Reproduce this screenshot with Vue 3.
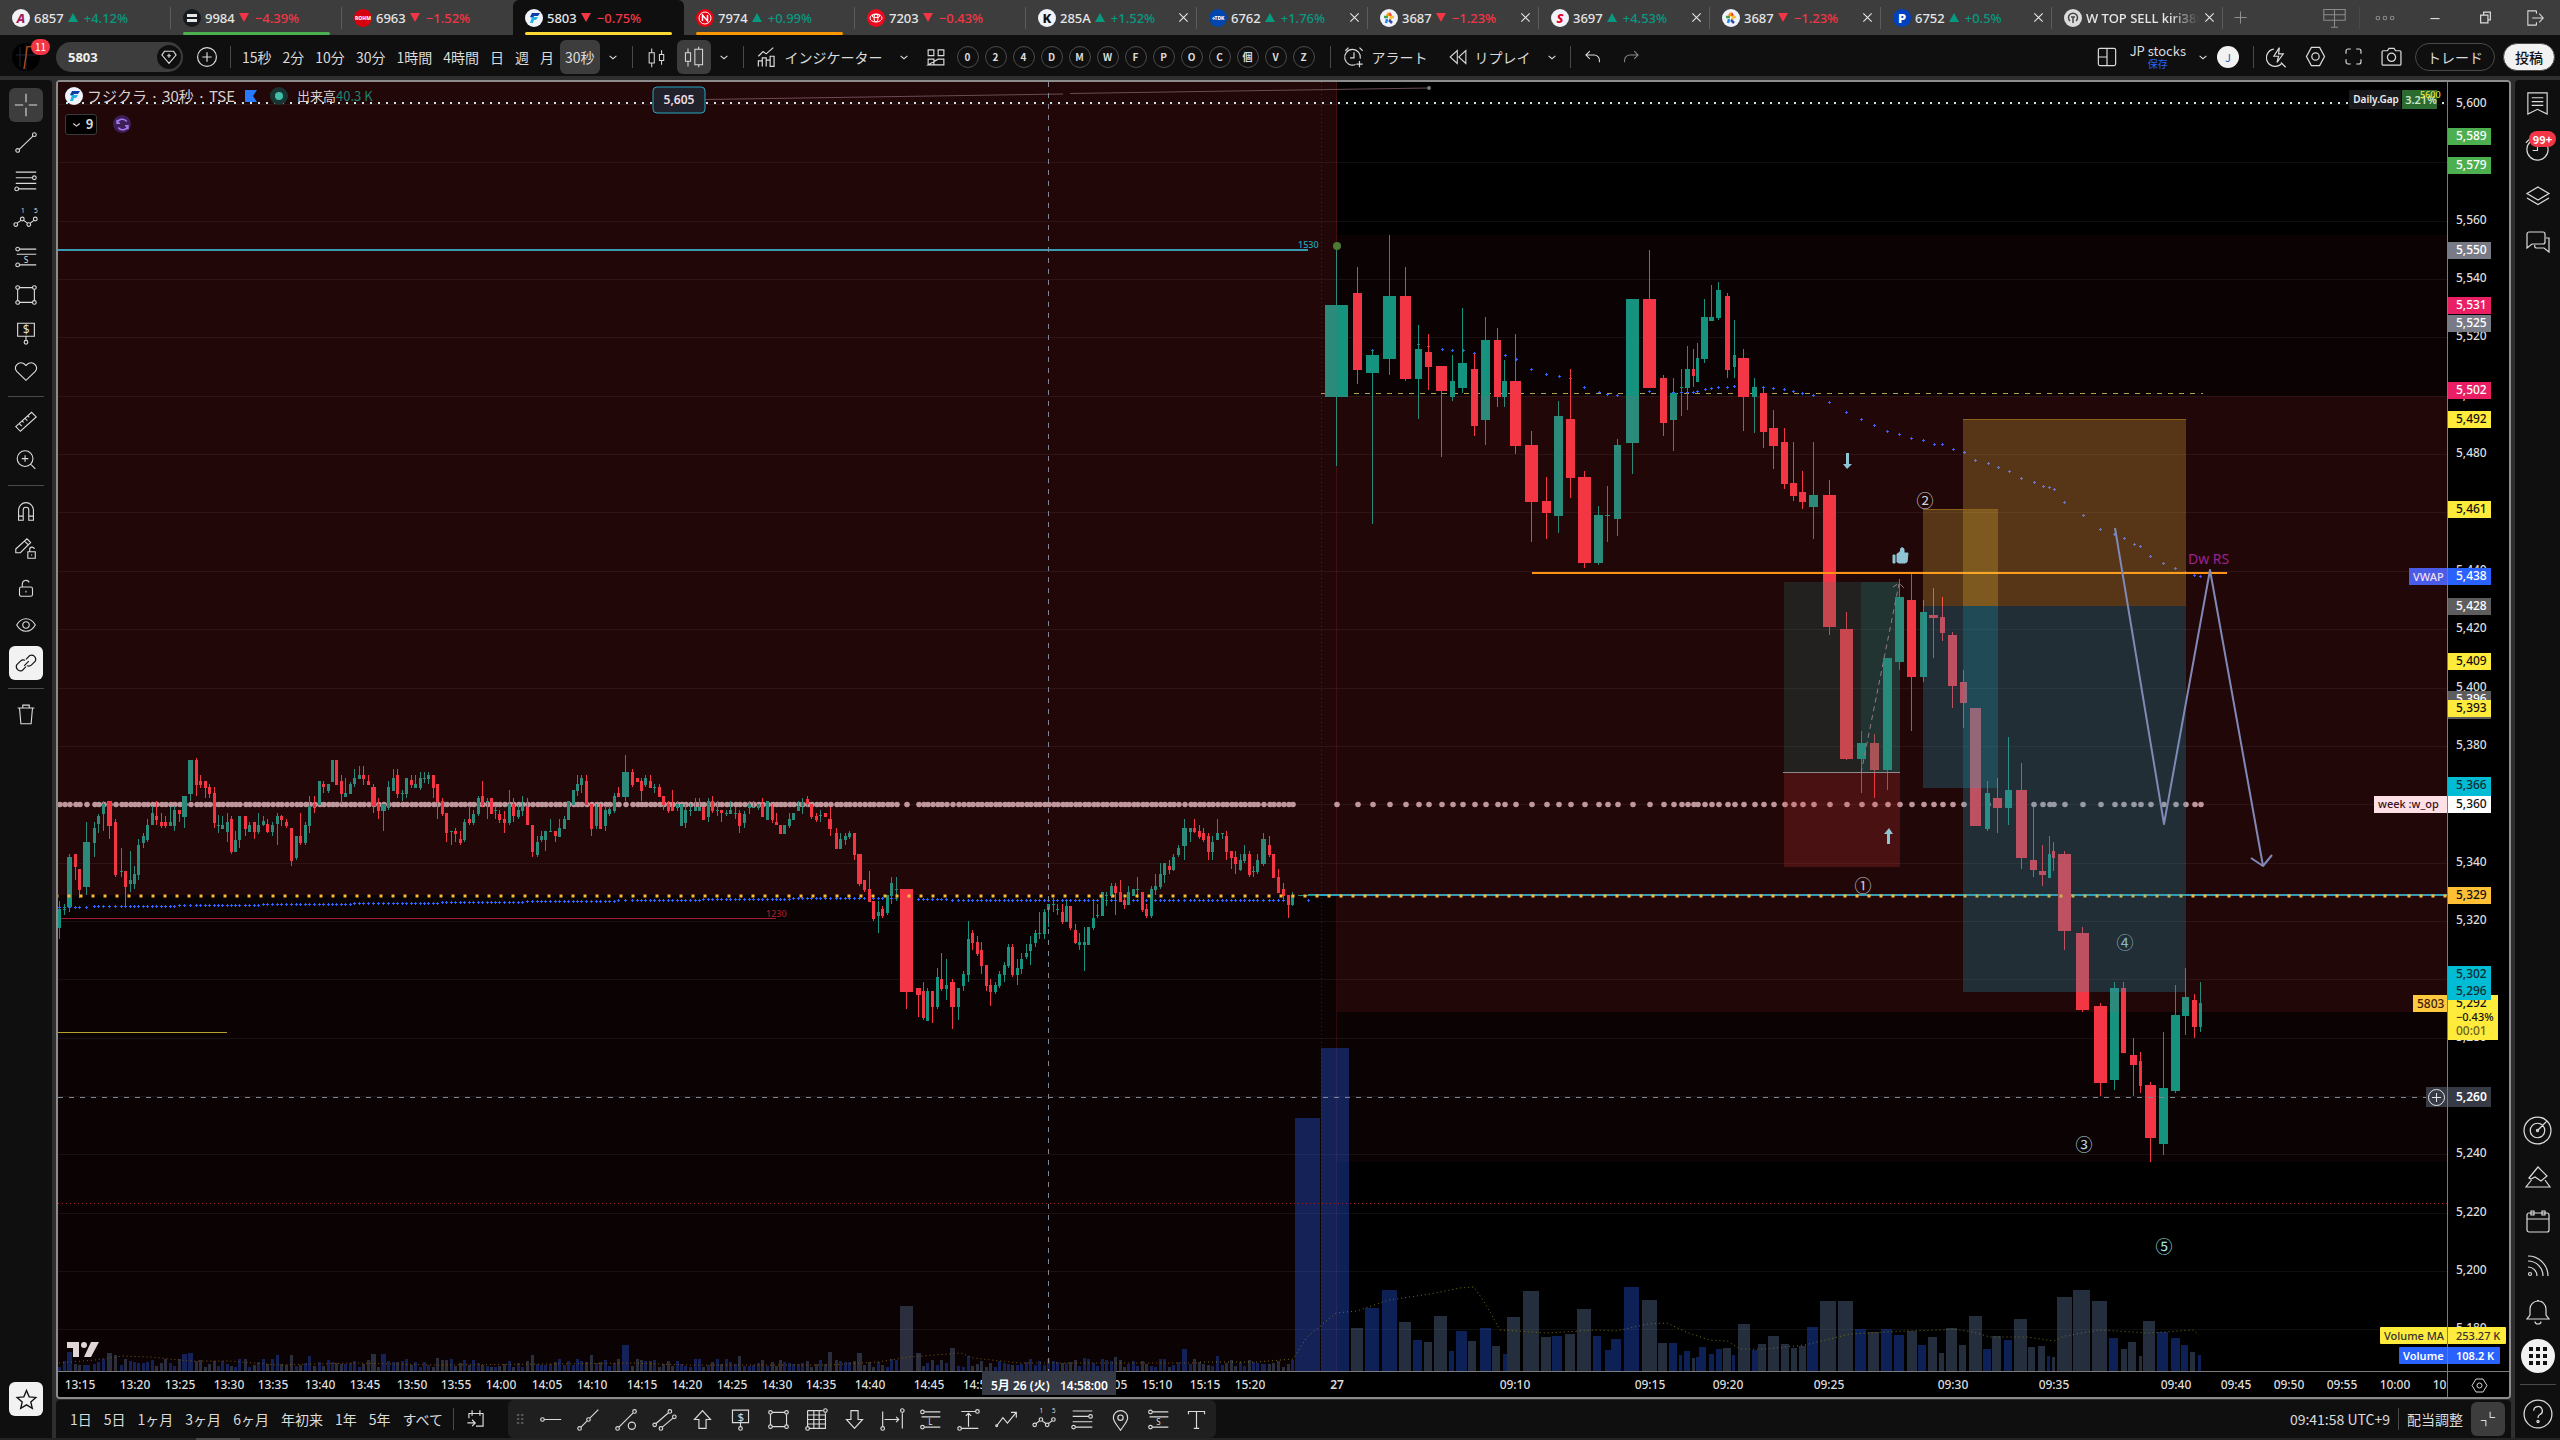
<script setup>
import { h } from 'vue'

/* ---------- icons (28 unit grid) ---------- */
const c = (x, y, r) => `M${x - r} ${y}a${r} ${r} 0 1 0 ${2 * r} 0a${r} ${r} 0 1 0 ${-2 * r} 0`
const lock = 'M9 14h10a2 2 0 0 1 2 2v6a2 2 0 0 1-2 2H9a2 2 0 0 1-2-2v-6a2 2 0 0 1 2-2zM14 18v2'
const icons = {
  cross: ['M14 2v9M14 17v9M2 14h9M17 14h9'],
  trend: [c(5, 22, 2) + c(23, 5, 2) + 'M7 20.500L21.500 6.500'],
  fib: ['M3 4.500h22M3 10.500h18M3 16.500h22M6 22.500h19' + c(23, 10.5, 2) + c(4, 22.5, 2)],
  wave: [c(3, 20, 2) + c(10, 14, 2) + c(17, 20, 2) + c(24, 14, 2) + 'M4.500 18.500l4-3M11.500 15.500l4 3M18.500 18.500l4-3', [8.5, 7, '1', 7], [22.500, 7, '5', 7]],
  pos: [c(5, 5.5, 2) + c(5, 22.5, 2) + 'M7 5.500h18M7 22.500h18M4 11h21', [11.5, 20, 'S', 9]],
  posl: [c(5, 5.5, 2) + c(5, 22.5, 2) + 'M7 5.500h18M7 22.500h18M4 11h21', [11.5, 20, 'L', 9]],
  rect: [c(5, 6, 2) + c(23, 6, 2) + c(5, 22, 2) + c(23, 22, 2) + 'M7 6h14M7 22h14M5 8v12M23 8v12'],
  money: ['M5 3.500h18v14H5zM14 17.500v4' + c(14, 24, 2), [10.5, 15.5, '$', 13]],
  heart: ['M14 24L4 14.500c-4-5 2-11.500 7.500-8.500l2.500 2 2.500-2c5.500-3 11.500 3.500 7.500 8.500z'],
  ruler: ['M3 19L20 3.500l5 5L8 24zM7 16l2.500 2.500M10 13l1.500 1.500M13 10l2.500 2.500M16 7.500l1.500 1.500'],
  zoomin: [c(13, 12.5, 8.5) + 'M19 18.500l5 5M13 9v7M9.500 12.500h7'],
  magnet: ['M6 24V13a8 8 0 0 1 16 0v11h-5V13a3 3 0 0 0-6 0v11zM6 19.500h5M17 19.500h5'],
  penlock: ['M3 14L15 3l4 4L8 18H3zM12.500 5.500l4 4M16 17h8v7h-8zM18 17v-2a2.500 2.500 0 0 1 5-1M20 20v1'],
  lock: [lock + 'M10 14v-3a4 4 0 0 1 7.500-2'],
  eye: ['M4 14c5-9 15-9 20 0-5 9-15 9-20 0z' + c(14, 14, 3.5)],
  link: ['M12 17l5-5M14 10l4-4a4.500 4.500 0 0 1 6 6l-4 4c-1.500 1.500-3.500 1.500-5 1M14 18l-4 4a4.500 4.500 0 0 1-6-6l4-4c1.500-1.500 3.500-1.500 5-1'],
  trash: ['M5 7.500h18M7 7.500l1.500 17h11L21 7.500M10.500 7V4.500h7V7'],
  star: ['M14 4l3 7 7.500.7-5.700 5 1.700 7.300-6.500-4-6.500 4 1.700-7.300-5.700-5L11 11z'],
  list: ['M4 3h20v22l-10-5-10 5zM8 8h12M8 12h12M8 16h12'],
  clock: [c(14, 14, 11) + 'M14 8v7H9M2 7l4-4M26 7l-4-4'],
  layers: ['M14 5l11 6.500L14 18 3 11.500zM3 16l11 6.500L25 16'],
  chat: ['M5 4h14a2 2 0 0 1 2 2v8a2 2 0 0 1-2 2H8l-5 4V6a2 2 0 0 1 2-2zM22 10h3v14l-5-4h-8a2 2 0 0 1-1-3'],
  radar: [c(14, 14, 13) + c(14, 14, 7) + c(14, 14, 1) + 'M14 14l9-9'],
  peaks: ['M7.500 18L2 25h24l-5-7M5 16l9-11 9 9-6 5-6-4-4 2z'],
  cal: ['M5 6h18a2 2 0 0 1 2 2v15a2 2 0 0 1-2 2H5a2 2 0 0 1-2-2V8a2 2 0 0 1 2-2zM3 12h22M7 4h3v4H7zM18 4h3v4h-3z'],
  rss: [c(6, 22, 1.5) + 'M4 4a20 20 0 0 1 20 20M4 9a15 15 0 0 1 15 15M4 15a9 9 0 0 1 9 9'],
  bell: ['M3 22h22l-3-4v-6a8 8 0 0 0-16 0v6zM11 24.500a3 2.500 0 0 0 6 0M13 3.500h2'],
  help: [c(14, 14, 13) + 'M10 11a4 4 0 1 1 5.500 3.700c-1 .5-1.500 1-1.500 3' + c(14, 21, 1)],
  plusc: [c(14, 14, 12) + 'M14 8v12M8 14h12'],
  plus: ['M14 4v20M4 14h20'],
  chev: ['M8 12l6 5 6-5'],
  bars: ['M6 9h6v12H6zM9 4v5M9 21v5M18 11h5v7h-5zM20.500 6v5M20.500 18v5'],
  bars2: ['M4 9h6v10H4zM7 4v5M7 19v6M15 5h9v18h-9zM19.500 2v3M19.500 23v3'],
  indic: ['M3 26v-7h5v7M8 26V15h5v11M13 26v-8h5v8M18 26V13h5v13zM3 13l6-6 4 3 9-8'],
  grid: ['M3 4h8v8H3zM17 4h8v8h-8zM3 17h8v8H3zM17 17h8v8H3z'],
  alarm: ['M22 16a10 10 0 1 0-6 7.500M14 8v7H9M3 6l4-4M25 6l-4-4M21 19v8M17 23h8'],
  rewind: ['M13 5v18L3 14zM25 5v18l-10-9z'],
  undo: ['M9 5l-6 6 6 6M3 11h13a8 8 0 0 1 8 8v3'],
  redo: ['M19 5l6 6-6 6M25 11H12a8 8 0 0 0-8 8v3'],
  layout: ['M5 3h18a2 2 0 0 1 2 2v18a2 2 0 0 1-2 2H5a2 2 0 0 1-2-2V5a2 2 0 0 1 2-2zM14 3v22M3 14h11'],
  quick: ['M10 4A11 11 0 1 0 20 22M19 21l6 6M17 2l-7 11h6l-2 8 8-11h-6z'],
  gear: ['M9 3h10l6 11-6 11H9L3 14z' + c(14, 14, 4.5)],
  full: ['M3 10V6a3 3 0 0 1 3-3h4M18 3h4a3 3 0 0 1 3 3v4M25 18v4a3 3 0 0 1-3 3h-4M10 25H6a3 3 0 0 1-3-3v-4'],
  camera: ['M4 7h5l2-3h6l2 3h5a1.500 1.500 0 0 1 1.500 1.500V23a1.500 1.500 0 0 1-1.500 1.500H4A1.500 1.500 0 0 1 2.500 23V8.500A1.500 1.500 0 0 1 4 7z' + c(14, 15, 5)],
  screens: ['M2 5h24v12H2zM14 5v20M10 25h8M2 11h24'],
  dots: [c(4, 14, 2.5) + c(14, 14, 2.5) + c(24, 14, 2.5)],
  min: ['M6 15h16'],
  restore: ['M6 10h12v13H6zM11 10V5h11v13h-4'],
  exit: ['M16 4H4v20h12M16 20v4M16 4v4M10 14h15M20 8l5.500 6-5.500 6'],
  x: ['M5 5l18 18M23 5L5 23'],
  gem: ['M7 5h14l4 6-11 13L3 11zM14 9v6M11 12h6'],
  calgo: ['M23 12V7H5v6M9 3v7M19 3v7M23 12v11H14M3 19h9M9 15l4 4-4 4'],
  hray: [c(5, 14, 2) + 'M7 14h19'],
  line: [c(4, 24, 2) + c(14, 14, 2) + 'M5.500 22.500l7-7M15.500 12.500L25 3'],
  chan: [c(4, 24, 2) + c(23, 5, 2) + c(20, 21, 4) + 'M5.500 22.500L21.500 6.500'],
  para: [c(3, 20, 2) + c(20, 5, 2) + c(10, 24, 2) + c(25, 11, 2) + 'M4.500 18.500l14-12M11.500 22.500l12-10'],
  up: ['M14 4l9 10h-5v10h-8V14H5z'],
  down: ['M14 24l9-10h-5V4h-8v10H5z'],
  gridd: ['M4 4h17M4 4v18M6 24h18V7M4 14h20M11 4v20M17 4v20M4 9h20M4 19h20' + c(24, 4, 2) + c(4, 24, 2)],
  width: ['M3 5v17M25 7v17M5 14h16M18 11l3 3-3 3' + c(3, 24, 2) + c(25, 4, 2)],
  height: ['M6 5h16M6 24h19M14 7v15M11 10l3-3 3 3' + c(24, 5, 2) + c(4, 24, 2)],
  zig: ['M3 21l7-9 5 6L25 6M25 12V6h-6' + c(3, 21, 1)],
  pin: ['M14 26c-5-7-8-10-8-14a8 8 0 0 1 16 0c0 4-3 7-8 14z' + c(14, 12, 3)],
  text: ['M5 8V5h18v3M14 5v19M11 24h6'],
  shrink: ['M17 4v8h7M4 16h7v8'],
  sync: ['M5 12a9 9 0 0 1 16-3M23 16a9 9 0 0 1-16 3M5 6v6h5M23 22v-6h-5']
}
const Icon = (p) => {
  const [d, ...texts] = icons[p.n]
  const s = p.s || 26
  return h('svg', { viewBox: '0 0 28 28', width: s, height: s, fill: 'none', stroke: 'currentColor', 'stroke-width': p.w || 1.2, style: 'display:block;flex:none', 'aria-hidden': 'true' }, [
    h('path', { d }),
    ...texts.map((t) => h('text', { x: t[0], y: t[1], 'font-size': t[3], fill: 'currentColor', stroke: 'none', 'font-family': 'Noto Sans' }, t[2]))
  ])
}

/* ---------- header data ---------- */
const tabs = [
  { code: '6857', ch: '+4.12%', logo: 'A', bg: '#f2f2f7', fg: '#9c1f5a' },
  { code: '9984', ch: '−4.39%', shape: 'bars', bg: '#171b20', line: '#4caf50' },
  { code: '6963', ch: '−1.52%', logo: 'ROHM', bg: '#d9000d', fg: '#fff', small: true },
  { code: '5803', ch: '−0.75%', shape: 'fuji', bg: '#f0f3fa', line: '#fdd835', on: true },
  { code: '7974', ch: '+0.99%', shape: 'ring', bg: '#e60012', line: '#ff9800' },
  { code: '7203', ch: '−0.43%', shape: 'oval', bg: '#eb0a1e' },
  { code: '285A', ch: '+1.52%', logo: 'K', bg: '#f0f3fa', fg: '#111', x: true, plain: true },
  { code: '6762', ch: '+1.76%', logo: '⋄TDK', bg: '#0046ad', fg: '#fff', small: true, x: true },
  { code: '3687', ch: '−1.23%', shape: 'star', bg: '#f0f3fa', x: true },
  { code: '3697', ch: '+4.53%', logo: 'S', bg: '#f0f3fa', fg: '#e2002b', x: true },
  { code: '3687', ch: '−1.23%', shape: 'star', bg: '#f0f3fa', x: true },
  { code: '6752', ch: '+0.5%', logo: 'P', bg: '#0041c0', fg: '#fff', x: true, plain: true },
  { code: 'W TOP SELL kiri380', ch: '', shape: 'face', bg: '#dbdbdb', x: true }
]
const intervals = ['15秒', '2分', '10分', '30分', '1時間', '4時間', '日', '週', '月', '30秒']
const favs = [...'024DMWFPOC個VZ']
const left = [['cross', 'trend', 'fib', 'wave', 'pos', 'rect', 'money', 'heart'], ['ruler', 'zoomin'], ['magnet', 'penlock', 'lock', 'eye', 'link'], ['trash']]
const ranges = ['1日', '5日', '1ヶ月', '3ヶ月', '6ヶ月', '年初来', '1年', '5年', 'すべて']
const drawTools = ['hray', 'line', 'chan', 'para', 'up', 'money', 'rect', 'gridd', 'down', 'width', 'posl', 'height', 'zig', 'wave', 'fib', 'pin', 'pos', 'text']

/* ---------- candles: centre width high top bottom low colour ---------- */
const parse = (ox, oy, sx, sy, text) =>
  text.trim().split(/[,\n]+/).map((row) => {
    const v = row.trim().split(' ')
    const n = v.slice(0, 6).map(Number)
    const w = Math.max(1, Math.round(n[1] / sx))
    const cx = Math.round(ox + n[0] / sx - 0.5)
    const y = (k) => Math.round(oy + n[k] / sy)
    return { cx, x: cx - Math.floor(w / 2), w, hi: y(2), top: y(3), h: Math.max(1, y(4) - y(3)), lo: y(5), up: v[6] === 'g', rawX: n[0] }
  })

const afternoon = parse(0, 700, 1.7422, 3, `
103 6 603 627 684 716 g,112 6 612 627 630 645 g,121 8 462 471 622 636 g,131 5 462 462 501 540 r,138 6 507 507 570 594 r,151 12 366 426 561 585 g
165 5 366 384 429 471 g,172 5 342 348 371 398 g,180 5 303 312 342 393 g,190 9 304 304 378 417 r,201 6 357 366 525 531 r,211 6 444 513 516 531 g
219 6 513 513 561 618 r,227 6 453 540 552 576 g,234 6 498 522 552 567 g,241 6 417 435 525 540 g,250 6 399 408 429 444 g,257 6 357 375 420 426 g
265 6 318 339 375 375 g,273 6 303 348 360 375 r,281 6 339 366 378 384 r,288 6 348 366 378 384 r,297 6 321 366 378 378 g,304 6 318 330 378 393 g
312 6 330 330 342 366 r,321 8 288 288 351 384 g,332 8 180 180 282 303 g,342 6 174 180 255 288 r,349 6 225 243 255 264 r,358 6 243 243 264 294 r
365 6 252 261 282 294 r,374 6 261 279 369 384 r,381 6 344 374 377 398 g,388 6 348 375 387 387 g,396 6 339 366 396 426 g,403 6 348 357 456 462 r,411 6 393 420 456 456 g
418 6 348 348 420 444 g,427 6 348 348 387 408 r,435 6 366 375 396 396 g,443 6 366 366 396 417 r,450 6 339 375 396 402 g,459 6 348 363 375 378 g
466 6 357 371 396 399 r,474 6 366 375 396 408 g,483 6 339 348 372 435 g,491 6 345 348 360 378 r,499 6 357 366 378 384 r,507 6 384 384 483 498 r
516 6 408 408 474 480 g,524 6 339 408 429 435 r,532 6 366 375 429 435 g,539 6 288 318 378 399 g,548 6 288 312 324 339 r,557 6 243 243 315 315 g
563 6 243 252 261 279 r,572 6 252 252 273 279 g,580 6 180 180 246 246 g,586 6 180 180 255 255 r,595 6 225 243 282 312 r,602 6 234 279 291 291 g
610 6 246 252 282 282 g,617 6 207 234 252 261 g,626 6 198 225 237 237 g,633 6 198 225 237 255 r,642 6 225 243 255 255 r,651 8 252 261 318 339 r
659 6 294 312 333 357 r,668 8 312 312 333 393 g,677 6 243 261 324 330 g,685 6 207 234 272 272 g,692 6 207 225 282 294 r,701 6 270 279 282 303 g
708 6 234 234 282 294 g,717 6 225 240 255 264 r,724 6 225 252 264 264 g,732 6 216 234 264 270 g,740 6 216 234 237 249 g,747 6 216 225 237 252 g
755 6 225 225 264 294 r,763 6 252 252 306 357 r,771 6 294 303 342 348 r,778 6 339 339 399 426 r,786 6 393 393 396 435 g,793 6 384 393 402 426 r
802 6 393 417 429 435 r,809 6 357 366 420 426 g,818 6 318 357 369 375 r,825 6 330 342 369 375 g,833 6 288 294 342 348 g,841 6 243 288 315 321 r
849 6 294 303 306 357 g,856 6 294 294 342 342 r,863 6 318 330 333 357 g,871 6 330 342 360 369 r,879 6 333 357 369 399 r,887 6 270 312 369 375 g
894 6 294 312 348 366 r,903 6 315 330 351 357 g,910 6 288 318 333 348 g,919 6 294 321 375 375 r,927 6 375 375 456 471 r,936 6 408 426 465 471 g
943 6 393 408 420 426 g,951 6 393 393 420 453 g,959 6 357 393 396 396 g,967 6 393 393 408 426 r,975 6 357 384 411 411 g,983 6 348 357 387 387 g
991 6 303 303 360 360 g,999 6 270 270 315 315 g,1006 6 225 252 273 288 g,1013 6 225 234 255 279 g,1021 6 225 243 315 315 r,1030 6 312 312 387 408 r
1040 6 312 321 378 387 g,1047 6 312 321 387 387 r,1055 6 318 330 378 393 g,1062 6 318 327 342 348 g,1070 6 279 288 333 339 g,1078 6 261 279 291 291 r
1090 12 165 216 291 303 g,1102 6 207 216 255 261 r,1110 6 234 234 246 246 r,1118 6 234 243 273 303 r,1125 6 225 234 255 261 g,1133 6 225 243 264 264 r
1140 6 252 261 264 279 g,1149 6 252 261 291 291 r,1156 6 288 288 315 330 r,1164 6 303 312 333 339 r,1172 6 270 321 333 333 r,1180 6 303 312 324 333 g
1188 6 312 312 378 378 g,1195 6 312 330 369 384 g,1203 6 312 330 333 348 g,1211 6 294 321 333 333 g,1218 6 294 321 333 333 g,1226 6 321 321 360 360 r
1234 6 294 303 351 366 g,1241 6 288 303 333 339 r,1250 6 303 330 333 348 g,1257 6 330 330 339 366 r,1265 6 330 339 342 348 g,1273 6 303 330 342 342 g
1281 6 321 339 342 357 g,1289 6 330 339 378 399 r,1297 6 333 342 369 384 g,1305 6 303 312 324 342 g,1313 6 303 321 324 324 g,1321 6 312 312 324 330 g
1328 6 294 312 351 351 r,1337 6 303 303 360 360 g,1345 6 312 321 360 369 r,1352 6 339 366 375 375 r,1360 6 375 375 402 402 r,1367 6 375 375 402 402 g
1375 6 339 357 378 384 g,1383 6 339 339 360 360 g,1391 6 303 318 333 333 g,1398 6 294 306 318 342 g,1407 6 288 297 312 321 r,1414 6 312 312 351 357 r
1422 6 339 348 360 366 r,1430 6 330 345 348 366 g,1438 6 339 339 351 351 r,1447 7 321 357 387 408 r,1457 6 384 399 447 447 r,1465 6 399 417 447 447 g
1473 6 399 408 420 435 g,1480 6 393 399 411 417 g,1488 6 399 399 465 480 r,1497 8 462 462 552 558 r,1506 6 540 540 570 576 r,1514 6 513 567 606 606 r
1521 6 603 603 657 663 r,1530 6 603 636 648 699 g,1538 6 618 627 648 654 r,1546 6 585 585 639 645 g,1553 6 531 549 587 612 g,1562 6 531 567 570 603 g`)

const closing = parse(860, 700, 3, 3, `
139 39 567 567 876 927 r,175 14 864 864 885 951 r,190 9 846 873 954 960 r,202 9 864 873 963 963 g,217 9 873 873 921 969 r,232 9 804 831 921 927 g
244 9 759 837 867 873 r,259 9 777 855 867 900 g,277 15 837 846 921 987 r,295 9 864 864 921 960 g,310 9 813 822 858 873 g,325 9 663 717 825 846 g
337 9 690 699 729 750 r,352 9 708 726 762 768 r,364 9 726 750 798 822 r,379 9 795 795 858 873 r,391 9 837 855 876 918 r,406 9 846 855 876 882 g
418 9 813 822 858 864 g,433 9 786 795 825 846 g,445 9 732 741 798 804 g,457 9 732 741 825 831 r,472 9 777 804 825 855 g,484 9 759 777 807 822 g
499 9 732 759 771 777 g,511 9 708 732 753 795 g,526 9 690 699 729 741 g,538 9 636 699 702 717 g,553 9 627 636 702 717 g,565 9 612 612 630 681 g
580 9 594 612 615 636 g,592 9 612 627 630 645 g,607 9 612 636 666 672 r,619 9 603 618 666 666 g,631 9 618 618 684 690 r,646 9 672 690 729 732 r
658 9 699 726 735 750 g,673 9 681 726 735 813 g,685 9 681 681 735 735 g,700 9 600 654 684 690 g,712 9 612 645 648 654 g,727 9 576 576 648 648 g
739 9 576 585 588 618 g,754 9 549 558 588 594 g,766 9 549 558 579 645 r,781 9 540 576 606 606 r,793 9 594 600 615 627 r,805 9 558 576 615 615 g
820 9 567 567 588 588 g,832 9 531 567 570 594 g,847 9 576 576 630 636 r,859 9 612 627 648 654 r,874 9 558 567 648 654 g,886 9 522 558 570 585 g
901 9 489 522 561 567 g,913 9 489 489 525 549 g,928 9 480 498 510 522 r,940 9 462 471 510 513 g,955 9 435 444 465 471 g,973 15 357 384 438 480 g
991 9 384 384 396 426 g,1003 9 357 384 396 399 r,1018 9 375 393 411 417 r,1030 9 384 399 420 426 r,1045 9 399 408 456 480 r,1057 9 408 426 456 480 g
1072 9 357 399 420 420 g,1087 9 399 399 402 417 g,1099 9 393 408 456 480 r,1114 9 453 453 474 507 r,1126 9 453 471 492 522 r,1141 9 462 480 510 513 g
1153 9 435 462 483 489 g,1168 9 453 462 525 531 r,1180 9 498 513 516 531 g,1192 9 462 480 516 522 g,1210 15 399 417 492 498 g,1228 9 408 435 465 471 r
1240 9 462 462 534 534 r,1255 9 507 531 579 579 r,1270 9 549 567 588 603 r,1285 9 585 585 615 654 r,1297 9 576 585 615 618 g,1345 62 585 585 588 588 g`)

const morning = parse(1290, 200, 2.376, 2.529, `
110 55 118 266 498 673 g,160 21 169 235 430 465 r,196 30 380 392 438 819 g,236 31 89 243 402 443 g,274 26 169 243 453 458 r,305 17 316 377 453 554 g
329 16 339 384 422 481 r,360 26 420 420 483 650 r,386 12 392 458 498 508 g,410 22 273 412 475 488 g,438 17 389 427 572 597 r,464 21 296 354 556 620 g
493 16 324 354 498 524 r,510 12 405 458 498 524 g,536 26 339 458 622 642 r,573 31 584 620 764 865 r,609 21 701 761 792 857 r,638 22 508 546 799 842 g
666 21 427 554 703 754 r,699 31 685 701 918 931 r,733 22 774 797 918 923 g,754 12 723 797 799 865 g,778 16 604 620 807 850 g,814 31 250 250 615 693 g
854 31 126 250 475 475 r,887 17 443 450 564 597 r,911 16 450 488 556 635 g,930 7 427 473 475 546 g,944 12 369 427 475 531 g,958 7 377 427 445 473 r
968 7 362 400 460 460 g,985 17 250 296 402 412 g,1001 12 215 296 306 306 g,1018 12 207 228 298 303 g,1039 12 235 243 430 450 r,1056 8 303 392 422 450 g
1077 26 377 400 498 584 r,1103 11 450 473 498 589 g,1125 16 473 488 587 627 r,1148 21 531 577 622 680 r,1174 17 577 612 718 731 r,1196 17 612 716 749 761 r
1217 17 685 738 764 781 r,1243 21 612 746 776 857 g,1281 31 708 746 1080 1100 r,1322 31 1042 1085 1414 1416 r,1357 21 1343 1373 1414 1500 g
1388 21 1351 1373 1442 1512 r,1419 21 1158 1158 1442 1492 g,1448 22 959 1004 1168 1189 g,1476 21 945 1012 1206 1343 r`)

const decline = parse(1760, 380, 2.8, 1.742, `
458 20 383 404 517 526 g,485 25 362 409 415 484 r,511 14 378 413 441 455 r,539 26 439 444 533 571 r,570 20 505 526 563 606 r,603 31 571 571 777 777 r
637 14 699 720 782 786 g,665 26 693 728 746 789 r,696 20 622 714 746 775 g,732 31 667 714 833 852 r,766 20 743 836 854 866 r,791 20 810 855 862 882 r
810 9 794 826 868 868 g,822 8 805 821 833 855 r,852 37 821 826 960 993 r,903 36 953 963 1098 1101 r,953 37 1085 1091 1225 1247 r,992 25 1049 1059 1220 1237 g
1018 14 1049 1059 1173 1173 r,1046 20 1146 1176 1193 1247 r,1065 9 1171 1186 1230 1242 r,1093 31 1223 1228 1321 1363 r,1129 25 1136 1233 1331 1350 g
1163 25 1054 1106 1239 1242 g,1191 19 1024 1075 1108 1141 g,1216 14 1070 1080 1127 1146 r,1233 9 1049 1085 1127 1136 g`)

const candles = [...afternoon, ...closing, ...morning, ...decline]

/* ---------- vwap crosses ---------- */
const pairs = (ox, oy, sx, sy, t) => t.trim().split(' ').map((p) => {
  const [x, y] = p.split(',').map(Number)
  return [Math.round(ox + x / sx), Math.round(oy + y / sy)]
})
const vwap = [
  ...afternoon.map((k) => [k.cx, 907 - Math.min(9, Math.floor(k.rawX / 153))]),
  ...closing.slice(1).map((k) => [k.cx, k.rawX < 270 ? 899 : 900]),
  ...pairs(1290, 200, 2.376, 2.529, '196,380 305,365 329,368 360,377 386,380 410,380 438,388 510,393 536,401 573,428 609,441 638,446 666,451 699,474 733,485 754,490 778,494 854,482 911,485 930,485 944,485 958,485 968,482 985,479 1001,476 1018,474 1039,474 1056,471 1125,474 1148,476 1174,479 1196,482 1217,487 1243,492 1281,510 1322,537 1357,555 1388,570 1419,585 1448,593 1476,603 1505,608 1529,616 1550,618'),
  ...pairs(1760, 380, 2.8, 1.742, '539,121 570,125 603,139 637,144 665,152 696,159 732,171 766,178 791,184 810,187 822,190 852,212 903,236 953,260 992,269 1018,276 1046,285 1065,290 1093,306 1129,318 1163,327 1191,334 1216,339 1233,342')
]
const vwapPath = vwap.map(([x, y]) => `M${x - 1} ${y + 0.5}h3M${x + 0.5} ${y - 1}v3`).join('')

/* ---------- volume ---------- */
const peaks = { 88: 19, 138: 18, 145: 16, 233: 17, 241: 18, 350: 16, 368: 16, 391: 15, 472: 17, 486: 17, 553: 13, 672: 16, 747: 16, 791: 26, 935: 15, 1050: 19, 1088: 18, 1147: 65, 1160: 18, 1205: 23, 1225: 15, 1370: 13, 1411: 14, 1497: 22, 1538: 15 }
const early = [...afternoon, ...closing.slice(0, -1)].map((k, i) => ({ x: k.x, w: k.w, h: 4 + ((i * 37 + ((i * i) % 11) * 5) % 9), up: k.up, cx: k.cx }))
for (const [px, ph] of Object.entries(peaks)) {
  const x = px / 1.2645
  const hit = early.reduce((a, b) => (Math.abs(b.cx - x) < Math.abs(a.cx - x) ? b : a))
  hit.h = ph
}
const late = `141 33 294 b,177 36 84 b,205 16 924 g,225 18 864 b,247 20 810 b,268 16 906 g,284 12 960 b,298 10 966 g,314 17 888 g,328 7 993 b,342 14 933 b,356 11 963 g,373 14 924 b,387 10 978 g,398 5 1002 b,410 17 891 g,433 21 813 g,452 13 951 g,467 13 948 b,483 13 942 g,502 18 867 g,519 11 948 b,533 8 990 b,544 13 957 b,564 20 801 b,587 19 840 g,604 12 969 g,618 10 969 b,628 4 1005 b,636 8 993 b,645 4 1014 g,650 4 1011 b,657 9 981 b,669 6 1002 b,678 8 987 b,688 10 984 g,697 4 1005 b,711 16 912 g,725 8 990 b,735 10 972 g,750 14 948 g,764 11 972 g,776 8 984 g,787 9 978 g,801 15 921 b,820 21 843 g,843 19 843 g,863 14 927 b,880 14 936 g,897 14 927 b,914 13 945 b,930 13 933 g,943 11 975 b,957 12 951 g,969 6 999 g,982 14 924 g,997 9 975 g,1013 17 888 g,1029 10 987 b,1041 12 948 g,1056 11 960 b,1072 17 897 g,1087 9 981 g,1099 9 978 g,1109 4 1008 b,1115 4 1011 g,1130 19 831 g,1152 22 810 g,1175 19 843 g,1194 12 954 b,1207 8 987 g,1218 10 966 g,1229 4 1008 g,1240 16 903 g,1258 15 936 b,1275 12 954 b,1287 9 975 b,1297 7 996 g,1306 4 1005 b`
  .split(',').map((r) => {
    const [x, w, t, k] = r.split(' ')
    const bw = Math.round(w / 1.3067)
    return { x: Math.round(1200 + x / 1.3067 - bw / 2), w: bw, h: Math.round((1053 - t) / 3), up: k === 'b' }
  })
const volume = [...early, ...late]
const maEarly = pairs(0, 1240, 1.2645, 3, '75,368 120,360 155,348 190,350 240,364 290,362 350,374 450,370 550,374 700,372 800,368 870,376 1050,376 1110,366 1150,350 1215,340 1230,355 1290,368 1400,370 1517,368').join(' ')
const maLate = pairs(1200, 1020, 1.3067, 3, '0,1025 75,1025 122,1018 140,950 178,879 205,872 247,840 300,823 340,803 358,800 372,850 392,930 455,938 519,931 544,934 585,912 610,910 635,935 665,960 688,963 705,987 740,987 790,975 850,942 920,932 970,931 984,926 1010,935 1032,950 1080,950 1116,962 1130,948 1175,930 1240,940 1298,930 1306,944').join(' ')

/* ---------- axes ---------- */
const ticks = Array.from({ length: 22 }, (_, i) => ({ y: Math.round(104 + i * 58.35), label: (5600 - i * 20).toLocaleString('en-US') })).filter((t) => t.label !== '5,580')
const gridY = Array.from({ length: 22 }, (_, i) => Math.round(104 + i * 58.35))
const tags = [
  ['5,589', 128, '#4caf50', '#fff'], ['5,579', 157, '#4caf50', '#fff'], ['5,550', 242, '#787b86', '#fff'], ['5,531', 297, '#e91e63', '#fff'],
  ['5,525', 315, '#787b86', '#fff'], ['5,502', 382, '#e91e63', '#fff'], ['5,492', 411, '#ffeb3b', '#111'], ['5,461', 501, '#ffeb3b', '#111'],
  ['5,438', 568, '#2962ff', '#fff'], ['5,428', 598, '#5d5d5d', '#fff'], ['5,409', 653, '#ffeb3b', '#111'], ['', 702, '#5d5d5d', '#fff'], ['5,396', 691, '#5d5d5d', '#fff'],
  ['5,393', 700, '#ffeb3b', '#111'], ['', 779, '#00bcd4', '#111'], ['5,366', 777, '#00bcd4', '#0d2b30'], ['5,360', 796, '#ffffff', '#111'], ['5,329', 887, '#ffc036', '#111']
]
const times = [['13:15', 80], ['13:20', 135], ['13:25', 180], ['13:30', 229], ['13:35', 273], ['13:40', 320], ['13:45', 365], ['13:50', 412], ['13:55', 456], ['14:00', 501], ['14:05', 547], ['14:10', 592], ['14:15', 642], ['14:20', 687], ['14:25', 732], ['14:30', 777], ['14:35', 821], ['14:40', 870], ['14:45', 929], ['14:50', 978], ['15:05', 1112], ['15:10', 1157], ['15:15', 1205], ['15:20', 1250], ['27', 1337], ['09:10', 1515], ['09:15', 1650], ['09:20', 1728], ['09:25', 1829], ['09:30', 1953], ['09:35', 2054], ['09:40', 2176], ['09:45', 2236], ['09:50', 2289], ['09:55', 2342], ['10:00', 2395], ['10:05', 2448]]
const marks = [['①', 1863, 886, '#c3c9cc'], ['②', 1925, 501, '#c8d4d8'], ['③', 2084, 1145, '#b5d9de'], ['④', 2125, 943, '#86b8c6'], ['⑤', 2164, 1247, '#a5e0e6']]
</script>

<template>
  <div class="app">
    <nav class="tabs">
      <a v-for="(t, i) in tabs" :key="i" href="#" class="tab" :class="{ on: t.on, before: tabs[i + 1] && tabs[i + 1].on }">
        <span class="logo" :class="{ small: t.small, plain: t.plain }" :style="{ background: t.bg, color: t.fg }">
          <template v-if="t.logo">{{ t.logo }}</template>
          <svg v-else viewBox="0 0 18 18" width="18" height="18">
            <path v-if="t.shape === 'bars'" d="M4 5h10v3H4zM4 10h10v3H4z" fill="#e8e8e8" />
            <g v-else-if="t.shape === 'fuji'"><path d="M5 8l2-4h8l-2 3H9L8 9z" fill="#0a3fa8" /><path d="M5 14l2-6h6l-2 3H9l-1 3z" fill="#1eb4e6" /></g>
            <g v-else-if="t.shape === 'ring'" fill="none" stroke="#fff"><circle cx="9" cy="9" r="6" /><path d="M6.500 12V6l5 6V6" stroke-width="1.500" /></g>
            <g v-else-if="t.shape === 'oval'" fill="none" stroke="#fff"><ellipse cx="9" cy="9" rx="6" ry="4" /><ellipse cx="9" cy="9" rx="2" ry="4" /><ellipse cx="9" cy="7" rx="4" ry="1.500" /></g>
            <g v-else-if="t.shape === 'star'" fill="none" stroke-width="2.500"><path d="M9 4l2 3" stroke="#e53935" /><path d="M9 4L7 7" stroke="#ff9800" /><path d="M4 8h4" stroke="#43a047" /><path d="M14 8h-3l-1 3" stroke="#fbc02d" /><path d="M6 14l1-4" stroke="#1e88e5" /><path d="M12 14l-3-3" stroke="#3949ab" /></g>
            <g v-else fill="none" stroke="#444" stroke-width="1.500"><path d="M6 12a4.500 4.500 0 1 1 6 0" /><path d="M9 8v6M7 8h4" /></g>
          </svg>
        </span>
        <span class="code" :class="{ long: !t.ch }">{{ t.code }}</span>
        <span v-if="t.ch" class="chg" :class="t.ch[0] === '+' ? 'up' : 'dn'"><i></i>{{ t.ch }}</span>
        <button v-if="t.x" class="close" aria-label="閉じる"><Icon n="x" :s="13" :w="2.400" /></button>
        <span v-if="t.line" class="mark" :style="{ background: t.line }"></span>
      </a>
      <button class="addtab" aria-label="追加"><Icon n="plus" :s="17" :w="1.500" /></button>
      <div class="win">
        <button class="dim" aria-label="レイアウト"><Icon n="screens" :s="25" /></button><span class="vsep"></span>
        <button class="dim" aria-label="その他"><Icon n="dots" :s="20" :w="1.500" /></button>
        <button aria-label="最小化"><Icon n="min" :s="16" :w="2" /></button>
        <button aria-label="元に戻す"><Icon n="restore" :s="17" :w="2" /></button>
        <button aria-label="終了"><Icon n="exit" :s="20" :w="1.500" /></button>
      </div>
    </nav>

    <header class="bar">
      <button class="avatar" aria-label="メニュー">
        <svg viewBox="0 0 28 28" width="28" height="28"><circle cx="14" cy="14" r="14" fill="#000" /><path d="M4 12h20M8 4v20M14 1v26" stroke="#1f2530" /><path d="M12 26l2-13 1-9 7-1" stroke="#a34a1c" stroke-width="1.500" fill="none" /></svg>
        <span class="badge">11</span>
      </button>
      <div class="search"><input aria-label="シンボル" value="5803" /><button aria-label="銘柄"><Icon n="gem" :s="18" :w="1.800" /></button></div>
      <button class="sq cmp" aria-label="比較"><Icon n="plusc" :s="22" :w="1.500" /></button>
      <span class="vsep flush"></span>
      <div class="ints"><button v-for="t in intervals" :key="t" :class="{ sel: t === '30秒' }">{{ t }}</button></div>
      <button class="cv" aria-label="時間足"><Icon n="chev" :s="16" :w="1.800" /></button>
      <span class="vsep"></span>
      <div class="styles">
        <button class="sq" aria-label="ローソク足"><Icon n="bars" :s="24" /></button>
        <button class="sq sel" aria-label="出来高ローソク足"><Icon n="bars2" :s="24" /></button>
      </div>
      <button class="cv" aria-label="種類"><Icon n="chev" :s="16" :w="1.800" /></button>
      <span class="vsep"></span>
      <button class="lbl"><Icon n="indic" :s="22" :w="1.500" />インジケーター</button>
      <button class="cv wide" aria-label="お気に入り"><Icon n="chev" :s="16" :w="1.800" /></button>
      <button class="sq" aria-label="テンプレート"><Icon n="grid" :s="20" :w="1.600" /></button>
      <div class="favs"><button v-for="f in favs" :key="f">{{ f }}</button></div>
      <span class="vsep"></span>
      <button class="lbl"><Icon n="alarm" :s="22" :w="1.500" />アラート</button>
      <button class="lbl rp"><Icon n="rewind" :s="20" :w="1.500" />リプレイ</button>
      <button class="cv wide" aria-label="リプレイ設定"><Icon n="chev" :s="16" :w="1.800" /></button>
      <span class="vsep tight"></span>
      <button class="sq un" aria-label="元に戻す"><Icon n="undo" :s="18" :w="1.600" /></button>
      <button class="sq un dim" aria-label="やり直し"><Icon n="redo" :s="18" :w="1.600" /></button>
      <div class="right">
        <button class="sq" aria-label="レイアウト設定"><Icon n="layout" :s="22" :w="1.500" /></button>
        <button class="name"><span>JP stocks</span><small>保存</small></button>
        <button class="cv" aria-label="レイアウト"><Icon n="chev" :s="16" :w="1.800" /></button>
        <span class="jay">J</span><span class="vsep"></span>
        <button class="sq ri" aria-label="クイックサーチ"><Icon n="quick" :s="22" :w="1.500" /></button>
        <button class="sq ri" aria-label="設定"><Icon n="gear" :s="23" :w="1.500" /></button>
        <button class="sq ri" aria-label="全画面"><Icon n="full" :s="19" :w="1.700" /></button>
        <button class="sq ri" aria-label="スナップショット"><Icon n="camera" :s="23" :w="1.500" /></button>
        <button class="pill">トレード</button><button class="pill solid">投稿</button>
      </div>
    </header>

    <main class="main">
      <aside class="left">
        <template v-for="(g, gi) in left" :key="gi">
          <hr v-if="gi" />
          <button v-for="n in g" :key="n" :aria-label="n" :class="{ sel: n === 'cross', lit: n === 'link' }"><Icon :n="n" /></button>
        </template>
        <button class="lit starb" aria-label="お気に入り"><Icon n="star" :s="25" :w="1.500" /></button>
      </aside>

      <section class="centre">
        <div class="frame">
          <svg class="plot" viewBox="58 82 2451 1315" preserveAspectRatio="xMinYMin meet">
            <defs><clipPath id="pane"><rect x="58" y="82" width="2389" height="1315" /></clipPath></defs>
            <rect x="58" y="82" width="2451" height="1315" fill="#000" />
            <rect x="58" y="82" width="1279" height="1289" fill="#0b0203" />
            <rect x="1337" y="235" width="1110" height="927" fill="#0b0203" />
            <path :d="gridY.map((y) => `M58 ${y + 0.5}H2447`).join('')" stroke="#fff" stroke-opacity=".06" />
            <path d="M1321.500 82V1371" stroke="#3a1150" stroke-dasharray="1 3" /><path d="M1336.500 82V1371" stroke="#f23645" stroke-opacity=".15" />

            <rect v-for="(v, i) in volume" :key="'v' + i" :x="v.x" :y="1371 - v.h" :width="v.w" :height="v.h" :fill="v.up ? '#2962ff' : '#6987af'" fill-opacity=".34" />
            <polyline :points="maEarly" fill="none" stroke="#7d5a18" stroke-width="1" stroke-dasharray="1 3" />
            <polyline :points="maLate" fill="none" stroke="#78701f" stroke-width="1" stroke-dasharray="1 3" />
            <path d="M58 1203.500H2447" stroke="#a32533" stroke-dasharray="1 3" />

            <g v-for="(k, i) in candles" :key="'d' + i"><circle v-if="k.cx !== 1308" :cx="k.cx + 1" cy="804.500" r="2.800" fill="#b9a1a5" /></g>
            <path :d="vwapPath" stroke="#2f62ff" />
            <path d="M58 250H1308" stroke="#22a7c0" stroke-width="2" /><path d="M1308 895H2447" stroke="#22a7c0" stroke-width="2" />
            <path d="M60 918.500H776" stroke="#a31d2b" /><path d="M58 1032.500H227" stroke="#b5a02a" />
            <path d="M1321 393.500H2203" stroke="#b5a052" stroke-dasharray="5 6" />

            <g v-for="(k, i) in candles" :key="'c' + i" :fill="k.up ? '#15937f' : '#f23645'">
              <rect :x="k.cx" :y="k.hi" width="1" :height="Math.max(1, k.lo - k.hi)" /><rect :x="k.x" :y="k.top" :width="k.w" :height="k.h" />
            </g>
            <rect x="58" y="82" width="1279" height="813" fill="#f23645" fill-opacity=".1" />
            <rect x="1337" y="396" width="1110" height="616" fill="#f23645" fill-opacity=".1" />
            <path d="M55.500 896H2447" stroke="#ffb92e" stroke-width="3" stroke-dasharray="3 9" />
            <path d="M1532 573H2227" stroke="#ff9113" stroke-width="2" />
            <path d="M66 103H2447" stroke="#c9e6e6" stroke-width="2" stroke-dasharray="2 6" />
            <path d="M705 99.500L1063 94M1070 93.500L1429 88" stroke="#6b4c52" /><circle cx="1429" cy="88" r="2" fill="#777" />

            <rect x="1784" y="582" width="116" height="191" fill="#238a7e" fill-opacity=".2" /><rect x="1861" y="582" width="39" height="191" fill="#238a7e" fill-opacity=".18" />
            <rect x="1784" y="773" width="116" height="94" fill="#eb3e3d" fill-opacity=".2" /><path d="M1783 772.500H1900" stroke="#8f8a8c" />
            <rect x="1923" y="509" width="75" height="97" fill="#f3c33f" fill-opacity=".25" /><rect x="1963" y="419" width="223" height="187" fill="#f3c33f" fill-opacity=".25" />
            <path d="M1963 419.500H2186M1923 509.500H1998" stroke="#8a621c" />
            <rect x="1923" y="606" width="75" height="182" fill="#1fa3bb" fill-opacity=".25" /><rect x="1963" y="606" width="223" height="386" fill="#1fa3bb" fill-opacity=".25" />
            <path d="M1861 773L1899 584M1893 587l6-4 5 5" stroke="#8f7c80" fill="none" stroke-dasharray="5 4" />
            <path d="M2115 528L2164 824 2210 570 2263 866M2251 858l12 8 9-11" stroke="#8089b6" stroke-width="2" fill="none" stroke-linejoin="round" />

            <circle cx="1337" cy="246" r="4" fill="#4c7a35" />
            <path d="M1846 453h3v11h3l-5 5-4-5h3zM1887 844h3v-10h3l-4-6-5 6h3z" fill="#8ec4d4" />
            <path d="M1893 555h2v8h-2zM1897 554l3-2 1-4q2-1 3 1v4h4l-1 9-2 1h-6l-2-1z" fill="#8ec4d4" stroke="#8ec4d4" stroke-linejoin="round" />
            <text x="2188" y="564" class="t14" fill="#9c2391">Dw RS</text>
            <text x="1298" y="248" class="t9" fill="#22a7c0">1530</text><text x="766" y="917" class="t9" fill="#a31d2b">1230</text>
            <text v-for="m in marks" :key="m[0]" :x="m[1]" :y="m[2] + 6" class="mk" :fill="m[3]">{{ m[0] }}</text>
            <path d="M1048.500 82V1371M58 1097.500H2426" stroke="#7f8794" stroke-dasharray="5 6" />

            <rect x="653" y="87" width="52" height="26" rx="4" fill="#20212b" stroke="#22a7c0" /><text x="679" y="104" class="t12 mid b" fill="#f0dde0">5,605</text>
            <rect x="2349" y="90" width="52" height="19" fill="#1a1a1e" /><rect x="2402" y="90" width="35" height="19" fill="#2c6b30" />
            <text x="2376" y="103" class="t10 mid b" fill="#eee">Daily.Gap</text><text x="2421" y="104" class="t11 mid b" fill="#cfe8cf">3.21%</text><text x="2420" y="98" class="t9" fill="#f0e030">5600</text>

            <g transform="translate(67 1338)" fill="#e0d6d8"><path d="M12 19H6V10H0V4h12zM24 19h-7l7-15h8z" /><circle cx="17" cy="7" r="3" /></g>

            <path d="M58 1371.500H2509M2447.500 82V1397" stroke="#7c7c7c" />
            <g clip-path="url(#pane)"><text v-for="t in times" :key="t[0]" :x="t[1]" y="1389" class="t12 mid" :class="{ b: t[0] === '27' }" fill="#dcdcdc">{{ t[0] }}</text></g>
            <rect x="982" y="1371" width="134" height="24" fill="#363a45" /><text x="991" y="1390" class="t12 b" fill="#fff">5月 26 (火)</text><text x="1060" y="1390" class="t12 b" fill="#fff">14:58:00</text>

            <text v-for="t in ticks" :key="t.label" x="2456" :y="t.y + 3" class="t12" fill="#dcdcdc">{{ t.label }}</text>
            <g v-for="(t, i) in tags" :key="'g' + i"><rect x="2448" :y="t[1]" width="43" height="17" :fill="t[2]" /><text x="2456" :y="t[1] + 12" class="t12" :fill="t[3]">{{ t[0] }}</text></g>
            <rect x="2409" y="568" width="38" height="17" fill="#4a5be8" /><text x="2413" y="581" class="t11" fill="#f0dff0">VWAP</text>
            <rect x="2374" y="796" width="73" height="17" fill="#ffe0e6" /><text x="2378" y="808" class="t11" fill="#3a1218">week :w_op</text>
            <rect x="2448" y="995" width="50" height="45" fill="#ffeb3b" /><rect x="2413" y="995" width="34" height="17" fill="#ffca3e" />
            <text x="2417" y="1008" class="t12" fill="#40210c">5803</text><text x="2456" y="1007" class="t12" fill="#111">5,292</text><text x="2456" y="1021" class="t11" fill="#111">−0.43%</text><text x="2456" y="1035" class="t12" fill="#6b6320">00:01</text>
            <rect x="2448" y="966" width="43" height="34" fill="#00bcd4" /><text x="2456" y="978" class="t12" fill="#0d2b30">5,302</text><text x="2456" y="995" class="t12" fill="#0d2b30">5,296</text>
            <rect x="2426" y="1087" width="65" height="20" fill="#363a45" /><text x="2456" y="1101" class="t12 b" fill="#fff">5,260</text>
            <g fill="none" stroke="#e6e6e6"><circle cx="2436.500" cy="1097.500" r="8" /><path d="M2432 1097.500h9M2436.500 1093v9" /></g>
            <rect x="2380" y="1327" width="126" height="17" rx="1" fill="#ffeb3b" /><text x="2384" y="1340" class="t11" fill="#333">Volume MA</text><text x="2456" y="1340" class="t11" fill="#333">253.27 K</text>
            <rect x="2399" y="1347" width="101" height="17" rx="1" fill="#2962ff" /><text x="2403" y="1360" class="t11 b" fill="#fff">Volume</text><text x="2456" y="1360" class="t11 b" fill="#fff">108.2 K</text>
            <path d="M2447.500 560V1371" stroke="#7c7c7c" />
            <g fill="none" stroke="#d6d6d6"><path d="M2476 1379h7l4 6.500-4 6.500h-7l-4-6.500z" /><circle cx="2479.500" cy="1385.500" r="2.500" /></g>
          </svg>
          <div class="legend">
            <div class="row">
              <svg viewBox="0 0 18 18" width="18" height="18"><circle cx="9" cy="9" r="9" fill="#f0f3fa" /><path d="M5 8l2-4h8l-2 3H9L8 9z" fill="#0a3fa8" /><path d="M5 14l2-6h6l-2 3H9l-1 3z" fill="#1eb4e6" /></svg>
              <strong>フジクラ · 30秒 · TSE</strong>
              <svg class="flag" viewBox="0 0 12 12" width="12" height="12"><path d="M0 0h12l-4 6 4 6H0z" fill="#2979ff" /></svg>
              <svg viewBox="0 0 18 18" width="18" height="18"><circle cx="9" cy="9" r="9" fill="#183531" /><circle cx="9" cy="9" r="4" fill="#42bda8" /></svg>
              <span class="vol">出来高<em>40.3 K</em></span>
            </div>
            <div class="row two"><button><Icon n="chev" :s="15" :w="2.200" />9</button><span class="sync"><Icon n="sync" :s="17" :w="2.400" /></span></div>
          </div>
        </div>

        <footer class="foot">
          <div class="ranges"><button v-for="r in ranges" :key="r">{{ r }}</button></div>
          <span class="vsep"></span>
          <button class="goto" aria-label="日付へ移動"><Icon n="calgo" :s="22" :w="1.500" /></button>
          <div class="tools">
            <span class="grip">⠿</span>
            <button v-for="(n, i) in drawTools" :key="i" :aria-label="n"><Icon :n="n" :s="25" :w="1.300" /></button>
          </div>
          <div class="status"><button>09:41:58 UTC+9</button><span class="vsep"></span><button>配当調整</button><button class="sel" aria-label="縮小"><Icon n="shrink" :s="20" :w="1.500" /></button></div>
        </footer>
      </section>

      <aside class="rightbar">
        <button aria-label="リスト"><Icon n="list" :s="27" /></button>
        <button class="ck" aria-label="アラート"><Icon n="clock" :s="27" /><span>99+</span></button>
        <button aria-label="レイヤー"><Icon n="layers" :s="28" /></button>
        <button class="ck" aria-label="チャット"><Icon n="chat" :s="28" /></button>
        <div class="grow"></div>
        <button aria-label="スクリーナー"><Icon n="radar" :s="29" /></button>
        <button aria-label="パイン"><Icon n="peaks" :s="28" /></button>
        <button aria-label="カレンダー"><Icon n="cal" :s="28" /></button>
        <button aria-label="ニュース"><Icon n="rss" :s="28" /></button>
        <button aria-label="通知"><Icon n="bell" :s="28" /></button>
        <button aria-label="アプリ"><svg viewBox="0 0 34 34" width="34" height="34"><circle cx="17" cy="17" r="17" fill="#f2f2f2" /><path d="M8 8h4v4H8zM15 8h4v4h-4zM22 8h4v4h-4zM8 15h4v4H8zM15 15h4v4h-4zM22 15h4v4h-4zM8 22h4v4H8zM15 22h4v4h-4zM22 22h4v4h-4z" fill="#111" /></svg></button>
        <hr />
        <button aria-label="ヘルプ"><Icon n="help" :s="30" /></button>
      </aside>
    </main>
    <div class="edge"><span></span></div>
  </div>
</template>

<style>
body { background: #2e2e2e; }
</style>
<style scoped>
* { box-sizing: border-box; }
.app { display: flex; flex-direction: column; min-height: 100vh; background: #2e2e2e; color: #dbdbdb; font: 14px/20px "Noto Sans CJK JP", "Noto Sans", sans-serif; white-space: nowrap; }
button { appearance: none; border: 0; margin: 0; padding: 0; background: none; color: inherit; font: inherit; display: flex; align-items: center; justify-content: center; flex: none; }
.vsep { width: 1px; height: 22px; background: #4a4a4a; flex: none; }
.sel { background: #3d3d3d; border-radius: 6px; }
.lit { background: #f2f2f2; color: #111; border-radius: 6px; }
.dim { color: #8a8a8a; }

.tabs { display: flex; height: 35px; background: #3d3d3d; font-family: "Noto Sans", "Noto Sans CJK JP", sans-serif; }
.tab { position: relative; display: flex; align-items: center; flex: 0 1 171px; min-width: 0; padding: 0 7px 0 12px; gap: 4px; color: #e6e6e6; text-decoration: none; font-size: 13px; font-weight: 500; }
.tab::after { content: ""; position: absolute; right: 0; top: 7px; height: 22px; width: 1px; background: #5c5c5c; }
.tab.on::after, .tab.before::after { display: none; }
.tab.on { background: #0f0f0f; border-radius: 6px 6px 0 0; }
.logo { width: 18px; height: 18px; border-radius: 50%; display: flex; align-items: center; justify-content: center; font-weight: 800; font-size: 13px; font-style: italic; flex: none; overflow: hidden; }
.logo.plain { font-style: normal; }
.logo.small { font-size: 5px; font-style: normal; }
.code.long { overflow: hidden; flex: 1; mask-image: linear-gradient(90deg, #000 75%, transparent); }
.chg { display: flex; align-items: center; gap: 6px; }
.chg i { border: 5px solid transparent; }
.up { color: #089981; }
.dn { color: #f23645; }
.up i { border-top: 0; border-bottom: 9px solid #089981; }
.dn i { border-bottom: 0; border-top: 9px solid #f23645; }
.close { margin-left: auto; }
.mark { position: absolute; left: 12px; right: 12px; bottom: 0; height: 3px; border-radius: 2px; }
.addtab { width: 35px; color: #999; }
.win { margin-left: auto; display: flex; align-items: center; }
.win button { width: 50px; }

.bar { display: flex; align-items: center; height: 41px; padding: 2px 5px 0 12px; background: #0f0f0f; }
.avatar { position: relative; width: 28px; height: 28px; margin-right: 16px; }
.badge { position: absolute; left: 19px; top: -4px; width: 19px; height: 16px; border-radius: 8px; background: #f23645; color: #fff; font-size: 10px; line-height: 16px; }
.search { width: 127px; height: 30px; border-radius: 15px; background: #3d3d3d; display: flex; align-items: center; padding: 0 2px 0 12px; }
.search input { flex: 1; min-width: 0; border: 0; background: none; color: #f0f0f0; font: 700 13px "Noto Sans"; padding: 0; outline: 0; }
.search button { width: 24px; height: 24px; border-radius: 50%; background: #0f0f0f; }
.sq { width: 34px; height: 34px; }
.cmp { width: 47px; }
.bar > .vsep { margin: 0 6px; }
.bar > .vsep.flush { margin-left: 0; }
.bar > .vsep.tight { margin: 0 3px; }
.ints { display: flex; gap: 1px; }
.ints button { height: 34px; padding: 0 5px; }
.styles { display: flex; gap: 4px; }
.cv { width: 26px; height: 34px; }
.cv.wide { width: 30px; }
.lbl { gap: 7px; padding: 0 6px; }
.rp { padding-left: 14px; }
.favs { display: flex; gap: 6px; padding: 0 9px 0 4px; }
.favs button { width: 22px; height: 22px; border: 1px solid #4a4a4a; border-radius: 50%; font-size: 10px; font-weight: 700; }
.un { width: 38px; }
.right { margin-left: auto; display: flex; align-items: center; }
.name { flex-direction: column; line-height: 14px; font-size: 13px; padding: 0 6px; }
.name small { color: #2962ff; font-size: 10px; line-height: 11px; }
.right .cv { width: 22px; }
.jay { width: 22px; height: 22px; border-radius: 50%; background: #f2f2f2; color: #1565c0; font-size: 11px; text-align: center; line-height: 22px; margin: 0 14px 0 3px; }
.right .vsep { margin-right: 4px; }
.ri { width: 38px; }
.pill { height: 28px; padding: 0 11px; border: 1px solid #4a4a4a; border-radius: 14px; margin-left: 5px; }
.pill.solid { background: #f2f2f2; color: #111; margin-left: 8px; font-weight: 500; }

.main { flex: 1; display: grid; grid-template-columns: 52px minmax(0, 1fr) 45px; column-gap: 4px; margin-top: 4px; }
.left { background: #0f0f0f; border-radius: 0 4px 0 0; padding-top: 6px; display: flex; flex-direction: column; align-items: center; }
.left button { width: 34px; height: 34px; margin: 2px 0; }
hr { width: 36px; height: 1px; margin: 6px 0; border: 0; background: #4a4a4a; flex: none; }
.left .starb { margin-top: auto; margin-bottom: 22px; }
.centre { display: flex; flex-direction: column; min-width: 0; gap: 1px; }
.frame { position: relative; flex: 1; display: flex; min-height: 600px; border: 2px solid #8c8c8c; border-radius: 4px; background: #000; overflow: hidden; }
.plot { display: block; width: 100%; min-width: 0; flex: 1; font-family: "Noto Sans", "Noto Sans CJK JP", sans-serif; font-weight: 500; }
.t9 { font-size: 9px; }
.t10 { font-size: 10px; }
.t11 { font-size: 11px; }
.t12 { font-size: 12px; }
.t14 { font-size: 14px; font-weight: 400; }
.mk { font: 17px "Noto Sans CJK JP"; text-anchor: middle; }
.mid { text-anchor: middle; }
.b { font-weight: 600; }
.legend { position: absolute; left: 7px; top: 3px; }
.row { display: flex; align-items: center; gap: 4px; height: 22px; }
.row strong { font-weight: 400; font-size: 15px; color: #d6d0d1; }
.flag { margin: 0 9px 0 6px; }
.vol { font-size: 13px; padding-left: 5px; color: #d6d0d1; }
.vol em { font-style: normal; color: #178472; }
.two { margin-top: 6px; gap: 16px; }
.two button { width: 32px; height: 21px; background: #000; border: 1px solid #3a3a3a; border-radius: 3px; font-size: 13px; font-weight: 700; gap: 2px; }
.sync { width: 18px; height: 18px; border-radius: 50%; background: #3d1f57; color: #a876f0; display: flex; align-items: center; justify-content: center; }

.foot { display: flex; align-items: center; height: 38px; background: #0f0f0f; border-radius: 4px 4px 0 0; }
.ranges { display: flex; padding: 0 4px 0 8px; }
.ranges button { padding: 0 6px; }
.goto { width: 45px; }
.tools { display: flex; align-items: center; height: 38px; background: #1f1f1f; border-radius: 6px; margin-left: 9px; }
.tools button { width: 38px; height: 38px; }
.grip { width: 24px; text-align: center; color: #5c5c5c; }
.status { margin-left: auto; display: flex; align-items: center; gap: 8px; padding-right: 6px; }
.status .sel { width: 34px; height: 34px; }

.rightbar { background: #0f0f0f; border-radius: 4px 0 0 0; display: flex; flex-direction: column; align-items: center; padding: 1px 0 2px; }
.rightbar button { width: 45px; height: 45px; }
.rightbar .ck { position: relative; height: 47px; }
.ck span { position: absolute; left: 14px; top: 5px; width: 27px; height: 16px; border-radius: 8px; background: #f23645; color: #fff; font-size: 11px; font-weight: 700; line-height: 16px; }
.grow { flex: 1; }
.edge { height: 2px; background: #242424; display: flex; }
.edge span { width: 44px; margin-left: 196px; background: #4a4a4a; }
</style>
